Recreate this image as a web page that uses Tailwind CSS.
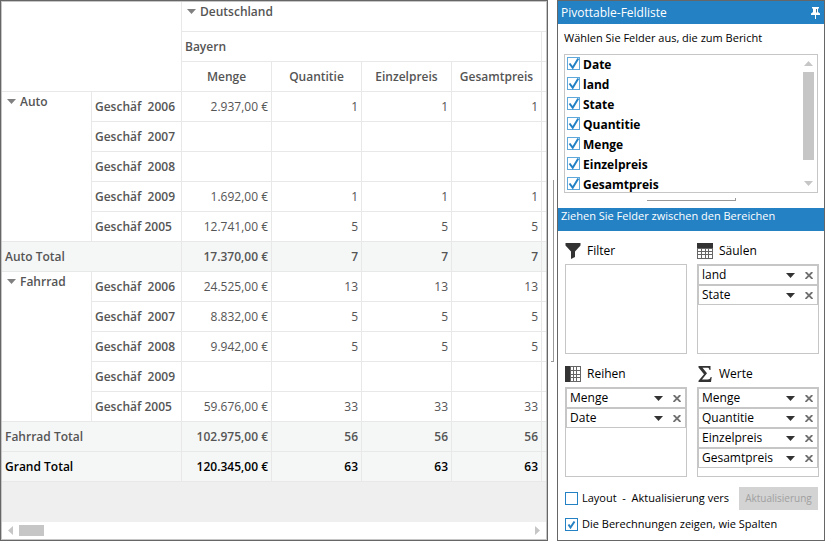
<!DOCTYPE html>
<html lang="de">
<head>
<meta charset="utf-8">
<meta name="viewport" content="width=device-width, initial-scale=1">
<title>Pivottable</title>
<script src="https://cdn.jsdelivr.net/npm/@tailwindcss/browser@4"></script>
</head>
<body class="bg-white font-['Open_Sans','Noto_Sans',sans-serif] text-xs text-black">
<svg class="hidden" aria-hidden="true">
  <symbol id="expand" viewBox="0 0 9 5"><path d="M0 0h9L4.500 5z" fill="currentColor"/></symbol>
  <symbol id="tick" viewBox="0 0 13 13"><path d="M2.500 6.500l3.200 4.200L11.300 1.500" fill="none" stroke="#2381c4" stroke-width="2"/></symbol>
  <symbol id="tick-small" viewBox="0 0 13 13"><path d="M3.500 6.500l2 3L9.500 3.500" fill="none" stroke="#2381c4" stroke-width="2"/></symbol>
  <symbol id="cross" viewBox="0 0 8 7"><path d="M.7 0L7.500 7M7.300 0L.5 7" fill="none" stroke="#707070" stroke-width="1.800"/></symbol>
</svg>
<div class="flex min-h-screen">

  <main class="flex min-w-0 flex-1 flex-col border border-[#666]">
    <div class="flex min-w-0 flex-1 flex-col overflow-hidden border border-[#c6c6c6] bg-[#efefef]">
      <div class="overflow-hidden">
      <table class="w-[630px] table-fixed border-separate border-spacing-0 bg-white text-[#555]">
        <colgroup><col span="7" class="w-[90px]"></colgroup>
        <thead id="head"></thead>
        <tbody id="body"></tbody>
      </table>
      </div>
      <div class="flex-1"></div>
      <div class="flex h-[17px] items-center bg-white pr-1.5 pl-1.5 text-[#c6c6c6]">
        <svg class="h-[9px] w-[5px]" viewBox="0 0 5 9"><path d="M5 0v9L0 4.500z" fill="currentColor"/></svg>
        <div class="ml-1.5 h-[11px] w-[25px] bg-[#c6c6c6]"></div>
        <svg class="ml-auto h-[9px] w-[5px]" viewBox="0 0 5 9"><path d="M0 0v9l5-4.500z" fill="currentColor"/></svg>
      </div>
    </div>
  </main>

  <div class="flex w-[9px] shrink-0 items-center justify-center">
    <div class="h-[182px] w-[3px] border-r border-b border-[#999]"></div>
  </div>

  <aside class="flex w-[268px] shrink-0 flex-col border border-[#666]">
    <header class="flex h-[23px] items-center justify-between bg-[#2381c4] pr-1 pl-[3px] text-white">
      <h2 class="leading-6">Pivottable-Feldliste</h2>
      <button type="button" aria-label="Anheften"><svg class="h-3 w-[9px]" viewBox="0 0 9 12"><path d="M1 0h7v1.500H7V5l2 1.500V8H5v4H4V8H0V6.500L2 5V1.500H1z" fill="#fff"/><path d="M5.500 2v3.500" stroke="#4c6f8c"/></svg></button>
    </header>
    <p class="mt-1 pl-1.5 text-[11px] leading-5">Wählen Sie Felder aus, die zum Bericht</p>
    <div class="mt-1.5 mr-1.5 ml-1.5 flex h-[139px] overflow-hidden border border-[#c6c6c6]">
      <div id="fields" class="flex-1 pl-0.5 font-bold"></div>
      <div class="flex w-[17px] flex-col items-center py-1.5 text-[#c6c6c6]">
        <svg class="h-[5px] w-[9px] rotate-180"><use href="#expand"/></svg>
        <div class="mt-1.5 h-[88px] w-[11px] bg-[#c6c6c6]"></div>
        <svg class="mt-auto h-[5px] w-[9px]"><use href="#expand"/></svg>
      </div>
    </div>
    <div class="flex h-[15px] justify-center pt-[5px]">
      <div class="h-[3px] w-[89px] border-r border-b border-[#999]"></div>
    </div>
    <h2 class="h-[23px] bg-[#2381c4] pl-[3px] text-[11px] leading-4 text-white">Ziehen Sie Felder zwischen den Bereichen</h2>
    <div class="grid grid-cols-2 gap-x-2.5 gap-y-2.5 pt-2.5 pr-[5px] pl-[7px]">
      <section>
        <h3 class="flex h-[23px] items-center gap-1.5 pb-1"><svg class="h-4 w-4" viewBox="0 0 16 16"><path d="M.5 0h15v2.500l-5.500 6V14l-4 2V8.500L.5 2.500z" fill="#333"/></svg>Filter</h3>
        <ul class="h-[90px] border border-[#c6c6c6]"></ul>
      </section>
      <section>
        <h3 class="flex h-[23px] items-center gap-1.5 pb-1"><svg class="h-4 w-4" viewBox="0 0 16 16"><path d="M0 0h16v16H0z" fill="#666"/><path d="M0 0h16v5H0z" fill="#333"/><path d="M1 6h3v2H1zM5 6h3v2H5zM9 6h2v2H9zM12 6h3v2h-3zM1 9h3v2H1zM5 9h3v2H5zM9 9h2v2H9zM12 9h3v2h-3zM1 12h3v3H1zM5 12h3v3H5zM9 12h2v3H9zM12 12h3v3h-3z" fill="#fff"/></svg>Säulen</h3>
        <ul class="h-[90px] border border-[#c6c6c6]" data-items="land,State"></ul>
      </section>
      <section>
        <h3 class="flex h-[23px] items-center gap-1.5 pb-1"><svg class="h-4 w-4" viewBox="0 0 16 16"><path d="M0 0h16v16H0z" fill="#666"/><path d="M0 0h5v16H0z" fill="#333"/><path d="M6 1h2v3H6zM9 1h2v3H9zM12 1h3v3h-3zM6 5h2v3H6zM9 5h2v3H9zM12 5h3v3h-3zM6 9h2v2H6zM9 9h2v2H9zM12 9h3v2h-3zM6 12h2v3H6zM9 12h2v3H9zM12 12h3v3h-3z" fill="#fff"/></svg>Reihen</h3>
        <ul class="h-[90px] border border-[#c6c6c6]" data-items="Menge,Date"></ul>
      </section>
      <section>
        <h3 class="flex h-[23px] items-center gap-1.5 pb-1"><svg class="h-4 w-4" viewBox="0 0 16 16"><path d="M1.500 0h12v4h-1c-.3-1.700-.8-2.200-2.500-2.200H5.500L10 7.300 5 13.500h5.500c2 0 2.700-.8 3.200-2.500h1L14 16H1.500v-1.200L7 8.200 1.500 1.400z" fill="#333"/></svg>Werte</h3>
        <ul class="h-[90px] border border-[#c6c6c6]" data-items="Menge,Quantitie,Einzelpreis,Gesamtpreis"></ul>
      </section>
    </div>
    <div class="mt-2.5 flex h-[23px] items-center justify-between pr-1.5 pl-[7px]">
      <label class="flex items-center gap-1 text-[11px] whitespace-pre"><input type="checkbox" class="h-[13px] w-[13px] appearance-none border border-[#2381c4]">Layout  -  Aktualisierung vers</label>
      <button type="button" disabled class="h-[23px] w-[79px] bg-[#d3d3d3] text-[10px] text-[#a0a0a0]">Aktualisierung</button>
    </div>
    <label class="mt-[5px] flex h-[18px] items-center gap-1 pl-[7px] text-[11px]"><span class="relative h-[13px] w-[13px]"><input type="checkbox" checked class="peer block h-[13px] w-[13px] appearance-none border border-[#2381c4]"><svg class="pointer-events-none absolute inset-0 hidden h-[13px] w-[13px] peer-checked:block"><use href="#tick-small"/></svg></span>Die Berechnungen zeigen, wie Spalten</label>
  </aside>
</div>
<script>
  const cell = 'h-[30px] border-r border-b border-[#e8e8e8]';
  const blank = 'p-0';
  const start = 'py-0 pr-0 pl-[3px] text-left font-semibold';
  const group = 'pt-0.5 pr-0 pb-0 pl-[5px] text-left align-top font-semibold';
  const number = 'py-0 pr-[3px] pl-0 text-right';
  const toggle = name => `<button type="button" class="flex items-center gap-1"><svg class="mb-0.5 h-[5px] w-[9px] text-[#808080]"><use href="#expand"/></svg>${name}</button>`;

  document.getElementById('head').innerHTML = `
    <tr><td colspan="2" rowspan="3" class="${cell} ${blank}"></td>
      <th colspan="5" class="${cell} ${group}">${toggle('Deutschland')}</th></tr>
    <tr><th colspan="4" class="${cell} ${start}">Bayern</th><th class="${cell} ${blank}"></th></tr>
    <tr>${['Menge', 'Quantitie', 'Einzelpreis', 'Gesamtpreis', ''].map(t => `<th class="${cell} ${blank} font-semibold">${t}</th>`).join('')}</tr>`;

  const groups = [
    ['Auto', [['Geschäf  2006', '2.937,00 €', 1], ['Geschäf  2007', '', ''], ['Geschäf  2008', '', ''], ['Geschäf  2009', '1.692,00 €', 1], ['Geschäf 2005', '12.741,00 €', 5]], '17.370,00 €', 7],
    ['Fahrrad', [['Geschäf  2006', '24.525,00 €', 13], ['Geschäf  2007', '8.832,00 €', 5], ['Geschäf  2008', '9.942,00 €', 5], ['Geschäf  2009', '', ''], ['Geschäf 2005', '59.676,00 €', 33]], '102.975,00 €', 56]
  ];
  const values = (sum, n, weight) => [sum, n, n, n, ''].map(v => `<td class="${cell} ${number} ${weight}">${v}</td>`).join('');
  const total = (name, sum, n, tone) => `<tr class="bg-[#f5f7f7] ${tone}"><th colspan="2" class="${cell} ${start}">${name}</th>${values(sum, n, 'font-semibold')}</tr>`;
  document.getElementById('body').innerHTML = groups.map(([name, rows, sum, n]) =>
    rows.map(([label, v, q], i) => `<tr>${i ? '' : `<th rowspan="5" class="${cell} ${group}">${toggle(name)}</th>`}
      <th class="${cell} ${start} whitespace-pre">${label}</th>${values(v, q, '')}</tr>`).join('') + total(name + ' Total', sum, n, '')
  ).join('') + total('Grand Total', '120.345,00 €', 63, 'text-black');

  document.getElementById('fields').innerHTML = ['Date', 'land', 'State', 'Quantitie', 'Menge', 'Einzelpreis', 'Gesamtpreis'].map(f => `
    <label class="flex h-5 items-start gap-[3px] leading-5"><span class="relative mt-0.5 h-[13px] w-[13px]"><input type="checkbox" checked class="peer block h-[13px] w-[13px] appearance-none border border-[#5fa8dc]"><svg class="pointer-events-none absolute inset-0 hidden h-[13px] w-[13px] peer-checked:block"><use href="#tick"/></svg></span>${f}</label>`).join('');

  document.querySelectorAll('ul[data-items]').forEach(ul => {
    ul.innerHTML = ul.dataset.items.split(',').map(t => `
      <li class="flex h-5 items-center border border-[#c6c6c6] pr-1 pl-[3px] leading-[18px]"><span class="flex-1">${t}</span>
        <button type="button" aria-label="${t} Optionen" class="mr-2.5 text-[#333]"><svg class="h-[5px] w-[9px]"><use href="#expand"/></svg></button>
        <button type="button" aria-label="${t} entfernen"><svg class="h-[7px] w-2"><use href="#cross"/></svg></button></li>`).join('');
  });
</script>
</body>
</html>
